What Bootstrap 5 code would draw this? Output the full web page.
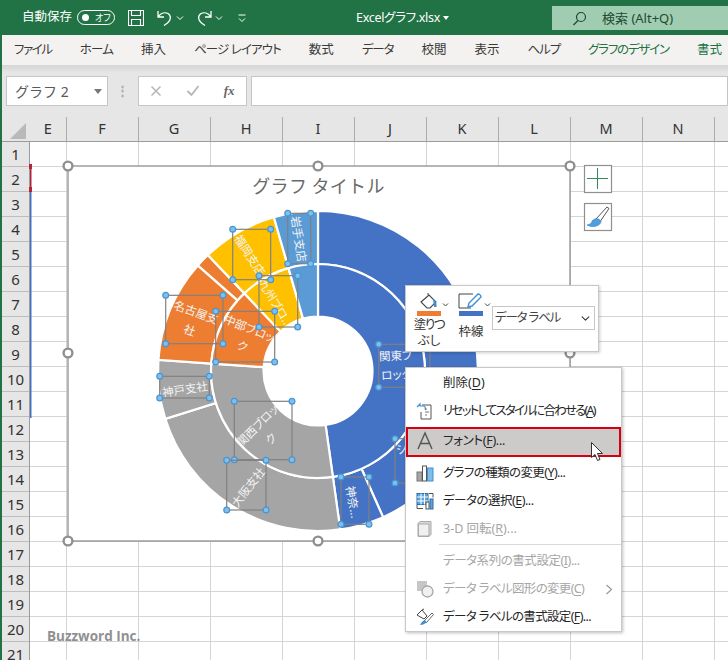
<!DOCTYPE html>
<html lang="ja">
<head>
<meta charset="utf-8">
<title>Excelグラフ.xlsx</title>
<link rel="stylesheet" href="https://cdn.jsdelivr.net/npm/bootstrap@5.3.0/dist/css/bootstrap.min.css">
<style>
html,body{height:660px;overflow:hidden;background:#fff}
body{font-family:"Noto Sans","Noto Sans CJK JP",sans-serif;font-size:12.5px;color:#262626;font-feature-settings:"palt"}
.stage{width:728px;height:660px;overflow:hidden;border-left:2px solid #217346}
.titlebar{height:35px;margin-left:-2px;background:#217346;color:#fff}
.qa-label{margin-left:22px;font-size:12.5px;width:55px}
.autotoggle{width:38px;height:15px;border:1.2px solid #fff;border-radius:8px;font-size:9px;line-height:13px;padding-left:17px;margin-right:13px}
.autotoggle::before{content:"";position:absolute;left:4px;top:3px;width:7px;height:7px;background:#fff;border-radius:50%}
.qa-undo{margin-left:12px}
.qa-chev{margin-left:2px}
.qa-redo{margin-left:11px}
.qa-more{margin-left:14px}
.filename{position:absolute;left:356px;top:9px;font-size:12.5px;letter-spacing:-.3px}
.filecaret{position:absolute;left:443px;top:16px;width:0;height:0;border:3px solid transparent;border-top:4px solid #fff;border-bottom:0}
.searchbox{position:absolute;left:552px;top:6px;width:176px;height:24px;background:#a0cdb1;color:#1d4a30;font-size:13px;padding-left:50px;line-height:24px}
.searchglass{position:absolute;left:20px;top:5px}
.tabbar{height:30px;margin-left:-2px;padding-left:14px;background:#f3f2f1;gap:28px;font-size:12.5px;line-height:30px;color:#3b3a39;white-space:nowrap;overflow:hidden}
.tabbar span{flex:none}
.tab-file{letter-spacing:-1.4px}
.tab-home{letter-spacing:-.8px}
.tab-page{letter-spacing:-.9px}
.tab-kana{letter-spacing:-1.1px}
.tabgreen{color:#217346;letter-spacing:-1.2px}
.tabgreen2{color:#217346}
.formula{height:52px;background:linear-gradient(#d6d5d4 0,#e6e6e6 8px);padding:11px 0 0 4px}
.fbox{height:30px;background:#fff;border:1px solid #c6c6c6}
.namebox{width:102px;padding:0 8px;font-size:14px;color:#595959;line-height:30px;font-feature-settings:normal}
.caret-d{position:absolute;right:5px;top:12px;width:0;height:0;border:4px solid transparent;border-top:5px solid #777;border-bottom:0}
.dots{width:30px;color:#aaa;font-size:13px;font-weight:700;line-height:28px}
.fxbox{width:110px;color:#aaa}
.fxbox i{font-family:"Liberation Serif",serif;font-weight:700;color:#666;font-size:13px}
.inputbox{width:478px;margin-left:4px}
.colhead{height:25px;background:#e6e6e6;border-bottom:1.5px solid #9c9c9c;font-size:14.5px;line-height:23px;color:#333;text-align:center}
.corner{width:28px;flex:none}
.cornermark{position:absolute;left:7px;top:5px}
.hcell{border-right:1px solid #acacac;flex:none;width:72px}
.hcell-e{width:36.5px}
.sheetbody{height:519px}
.rowhead{width:28px;flex:none;background:#e6e6e6;border-right:1.5px solid #9c9c9c;font-size:15px;color:#333;text-align:center}
.rowcell{height:25px;line-height:24px;border-bottom:1px solid #bdbdbd}
.cells{background-color:#fff;background-image:linear-gradient(to right,#d4d4d4 1px,transparent 1px),linear-gradient(to bottom,#d4d4d4 1px,transparent 1px);background-size:72px 25px,72px 25px;background-position:36px 0,0 -1px}
.overlay{position:absolute;left:-2px;top:0;width:728px;height:660px}
.cursorlayer{z-index:1100}
.charttitle{font-feature-settings:normal}
.wm{position:absolute;left:45px;top:626px;font-family:"Open Sans",sans-serif;font-weight:700;font-size:13.5px;color:#8b8b8b;opacity:.95}
.floatbar{position:absolute;left:403px;top:285px;width:194px;height:67px;background:#fff;border:1px solid #c8c8c8;box-shadow:1px 1px 3px rgba(0,0,0,.2);font-size:12.5px;line-height:15px;text-align:center}
.fb-tool{position:absolute;top:0;height:65px;color:#333}
.fb-fill{left:10px;width:48px}
.fb-line{left:52px;width:34px}
.fb-icon{position:absolute;left:0;top:6px}
.fb-tool span{display:block;position:absolute}
.fb-t1{left:-11px;top:31px;width:48px;letter-spacing:-1.5px}
.fb-t2{left:-11px;top:47px;width:48px}
.fb-t3{left:0;top:38px;width:26px}
.fb-select{position:absolute;left:86px;top:20px;width:103px;height:24px;min-height:0;padding:0 0 0 2px;border-radius:0;border-color:#c6c6c6;font-size:12.5px;color:#444;background-position:right 3px center;background-size:11px 9px;box-shadow:none;line-height:20px;font-family:inherit;font-feature-settings:"palt";letter-spacing:-1.2px}
.ctxmenu{position:absolute;left:403px;top:367px;width:217px;height:265px;padding:1px 0 0;margin:0;border:1px solid #c8c8c8;border-radius:0;background:#fff;box-shadow:1px 1px 3px rgba(0,0,0,.25);display:block;font-size:12.5px}
.ctxitem{height:28px;line-height:27px;padding:0 0 0 37px;color:#262626;position:relative;white-space:nowrap;font-size:12.5px}
.ctxitem u{text-underline-offset:2px}
.ctxitem svg{position:absolute;left:10px;top:5px}
.ctxhot{height:30px;line-height:27px;margin:2px 0;background:#cdcbc9;outline:2px solid #d4000f;outline-offset:-2px}
.ctxhot svg{top:4px;left:9px}
.ctxoff{color:#a6a6a6}
.ctxsep{height:1px;background:#d9d9d9;margin:1px 0 2px 33px}
.ctxitem svg.ctxarrow{left:auto;right:8px;top:9px}
.ls-a{letter-spacing:-1.8px}
.ls-b{letter-spacing:-.3px}
.ls-c{letter-spacing:-.6px}
.ls-d{letter-spacing:-.5px}
.ls-e{letter-spacing:-.45px}
.ls-f{letter-spacing:-.65px}
</style>
</head>
<body>
<div class="stage position-relative">
  <div class="titlebar d-flex align-items-center position-relative">
    <span class="qa-label">自動保存</span>
    <span class="autotoggle position-relative">オフ</span>
    <svg width="16" height="16" viewBox="0 0 16 16" fill="none" stroke="#fff" stroke-width="1.1"><path d="M.5.5h15v15H.5zM3.500.5v5h9v-5M3.500 15.500v-6h9v6"/></svg>
    <svg class="qa-undo" width="18" height="18" viewBox="0 0 18 18" fill="none" stroke="#fff" stroke-width="1.3"><path d="M2 2v6h6M2.500 7.500C5 4 9 3 12 4.500c3.500 2 3 7-.5 9.500L8 16.500"/></svg>
    <svg class="qa-chev" width="8" height="8" viewBox="0 0 8 8" fill="none" stroke="#fff"><path d="M1 2.500l3 3 3-3"/></svg>
    <svg class="qa-redo" width="18" height="18" viewBox="0 0 18 18" fill="none" stroke="#fff" stroke-width="1.3"><path d="M16 2v6h-6M15.500 7.500C13 4 9 3 6 4.500c-3.500 2-3 7 .5 9.500l3.500 2.500"/></svg>
    <svg class="qa-chev" width="8" height="8" viewBox="0 0 8 8" fill="none" stroke="#fff"><path d="M1 2.500l3 3 3-3"/></svg>
    <svg class="qa-more" width="10" height="10" viewBox="0 0 10 10" fill="none" stroke="#fff"><path d="M1.500 2h7M2 5.500l3 3 3-3"/></svg>
    <span class="filename">Excelグラフ.xlsx</span><span class="filecaret"></span>
    <div class="searchbox">
      <svg class="searchglass" width="15" height="15" viewBox="0 0 15 15" fill="none" stroke="#1d4a30" stroke-width="1.200"><circle cx="9" cy="6" r="4.500"/><path d="M6 9.500L1.500 14"/></svg>
      検索 (Alt+Q)
    </div>
  </div>
  <div class="tabbar d-flex">
    <span class="tab-file">ファイル</span><span class="tab-home">ホーム</span><span>挿入</span><span class="tab-page">ページ レイアウト</span><span>数式</span><span class="tab-kana">データ</span><span>校閲</span><span>表示</span><span class="tab-kana">ヘルプ</span><span class="tabgreen">グラフのデザイン</span><span class="tabgreen2">書式</span>
  </div>
  <div class="formula d-flex">
    <div class="fbox namebox position-relative">グラフ 2<span class="caret-d"></span></div>
    <div class="dots text-center">⋮</div>
    <div class="fbox fxbox d-flex align-items-center justify-content-around">
      <svg width="12" height="12" viewBox="0 0 12 12" stroke="#b5b5b5" stroke-width="1.500"><path d="M1.500 1.500l9 9M10.500 1.500l-9 9"/></svg>
      <svg width="14" height="12" viewBox="0 0 14 12" fill="none" stroke="#b5b5b5" stroke-width="1.800"><path d="M1.500 6l4 4 7-9"/></svg>
      <i>fx</i>
    </div>
    <div class="fbox inputbox"></div>
  </div>
  <div class="colhead d-flex position-relative">
    <div class="corner position-relative"><svg class="cornermark" width="18" height="18" viewBox="0 0 18 18"><path d="M1 17L17 1v16z" fill="#b9b9b9"/></svg></div>
    <div class="hcell hcell-e">E</div><div class="hcell">F</div><div class="hcell">G</div><div class="hcell">H</div><div class="hcell">I</div><div class="hcell">J</div><div class="hcell">K</div><div class="hcell">L</div><div class="hcell">M</div><div class="hcell">N</div><div class="hcell"></div>
  </div>
  <div class="sheetbody d-flex">
    <div class="rowhead">
      <div class="rowcell">1</div><div class="rowcell">2</div><div class="rowcell">3</div><div class="rowcell">4</div><div class="rowcell">5</div><div class="rowcell">6</div><div class="rowcell">7</div><div class="rowcell">8</div><div class="rowcell">9</div><div class="rowcell">10</div><div class="rowcell">11</div><div class="rowcell">12</div><div class="rowcell">13</div><div class="rowcell">14</div><div class="rowcell">15</div><div class="rowcell">16</div><div class="rowcell">17</div><div class="rowcell">18</div><div class="rowcell">19</div><div class="rowcell">20</div><div class="rowcell">21</div>
    </div>
    <div class="cells flex-grow-1"></div>
  </div>

  <svg class="overlay" id="chart" viewBox="0 0 728 660" font-family="'Noto Sans CJK JP',sans-serif">
    <rect x="29" y="164" width="3" height="5" fill="#b3263a"/><rect x="29" y="187" width="3" height="5" fill="#b3263a"/>
    <rect x="30" y="168" width="1.500" height="20" fill="#b3263a"/>
    <rect x="30" y="192" width="1.500" height="226" fill="#4472c4"/>
    <rect x="68" y="166" width="502" height="375" fill="#fff" stroke="#8f8f8f" stroke-width="1.300"/>
    <text class="charttitle" x="318.500" y="193" text-anchor="middle" font-size="18" letter-spacing=".3" fill="#6a6a6a">グラフ タイトル</text>
    <g id="donut"></g>
    <g id="labels" fill="#f4f4f4" font-size="11.500" text-anchor="middle"></g>
    <g id="boxes" fill="none" stroke="#808080" stroke-width="1.200"></g>
    <g id="handles" fill="#fff" stroke="#8f8f8f" stroke-width="2.400"></g>
    <rect x="584.500" y="165.500" width="27" height="27" fill="#fff" stroke="#8f8f8f" stroke-width="1.200"/>
    <path d="M587 178.500h21M597.500 168v21" stroke="#3b8a5f" stroke-width="1.100"/>
    <rect x="584.500" y="203.500" width="27" height="27" fill="#fff" stroke="#8f8f8f" stroke-width="1.200"/>
    <path d="M596 219l11-12 2 1.500-8.500 12.500z" fill="#fff" stroke="#555" stroke-width="1"/>
    <path d="M595 219c3-1 6 1 6 3-1 3-5 5-9 4.500-2 0-4-1-5-1.500 3-.5 5-2 5-4 1-1 2-2 3-2z" fill="#4f9fe0" stroke="#3a7fc0" stroke-width=".6"/>
  </svg>

  <div class="wm">Buzzword Inc.</div>

  <div class="floatbar">
    <div class="fb-tool fb-fill">
      <svg class="fb-icon" width="48" height="26" viewBox="0 0 48 26" fill="none">
        <path d="M5 10l8-7 7 7-6 6h-3z" stroke="#444" stroke-width="1.100"/><path d="M12 3V1" stroke="#444"/>
        <path d="M17 7c2 1 4 3 3.500 8h-2.500z" fill="#3f8fd2"/>
        <rect x="1" y="19" width="24" height="5" fill="#ed7d31"/>
        <path d="M27 11.500l2.500 2.500 2.500-2.500" stroke="#444"/>
      </svg>
      <span class="fb-t1">塗りつ</span><span class="fb-t2">ぶし</span>
    </div>
    <div class="fb-tool fb-line">
      <svg class="fb-icon" width="34" height="26" viewBox="0 0 34 26" fill="none">
        <path d="M13 16H1V2h14" stroke="#444" stroke-width="1"/>
        <path d="M10 15l1-4 9-9c1 0 3 1 3 3l-9 9z" fill="#fff" stroke="#3f8fd2" stroke-width="1.400"/>
        <rect x="1" y="19" width="24" height="5" fill="#4472c4"/>
        <path d="M27 11.500l2.500 2.500 2.500-2.500" stroke="#444"/>
      </svg>
      <span class="fb-t3">枠線</span>
    </div>
    <select class="form-select fb-select"><option>データ ラベル</option></select>
  </div>

  <div class="dropdown-menu ctxmenu">
    <div class="ctxitem">削除(<u>D</u>)</div>
    <div class="ctxitem ls-a">
      <svg width="18" height="18" viewBox="0 0 18 18" fill="none"><path d="M6 3h9v14H5V10" stroke="#555"/><path d="M1 5l3-3v2h3c2 0 3 2 2 4" stroke="#3f8fd2" stroke-width="1.200"/><path d="M9 7h2M9 10h4M9 13h2" stroke="#777"/></svg>
      リセットしてスタイルに合わせる(<u>A</u>)</div>
    <div class="ctxitem ctxhot ls-b">
      <svg width="20" height="20" viewBox="0 0 20 20" fill="none" stroke="#555" stroke-width="1.400"><path d="M3 18L10 2l7 16M5.500 12.500h9"/></svg>
      フォント(<u>F</u>)...</div>
    <div class="ctxitem ls-c">
      <svg width="18" height="18" viewBox="0 0 18 18"><rect x="1" y="8" width="5" height="9" fill="#a6a6a6" stroke="#777"/><rect x="6.500" y="2" width="4" height="15" fill="#fff" stroke="#555"/><rect x="11.500" y="4" width="5.500" height="13" fill="#7fbdea" stroke="#3f8fd2"/></svg>
      グラフの種類の変更(<u>Y</u>)...</div>
    <div class="ctxitem ls-d">
      <svg width="18" height="18" viewBox="0 0 18 18"><rect x="1" y="1.500" width="11" height="11" fill="#5da4de" stroke="#2f6ca8"/><path d="M1 5h11M1 9h11M5 1.500v11M8.500 1.500v11" stroke="#fff"/><path d="M13 1.500h4v4M1 13v3.500h6" fill="none" stroke="#555"/><rect x="10" y="10" width="3" height="7" fill="#fff" stroke="#555"/><rect x="14" y="7" width="3" height="10" fill="#5da4de" stroke="#2f6ca8"/></svg>
      データの選択(<u>E</u>)...</div>
    <div class="ctxitem ctxoff">
      <svg width="18" height="18" viewBox="0 0 18 18"><path d="M4 1.500h11v13l-2 2H2V3.500z" fill="#d9d9d9" stroke="#aaa"/><rect x="2.500" y="4" width="10.500" height="12" fill="#f0f0f0" stroke="#aaa"/></svg>
      3-D 回転(<u>R</u>)...</div>
    <div class="ctxsep"></div>
    <div class="ctxitem ctxoff ls-e">データ系列の書式設定(<u>I</u>)...</div>
    <div class="ctxitem ctxoff ls-f">
      <svg width="18" height="18" viewBox="0 0 18 18"><rect x="1" y="1" width="10" height="10" fill="#c6c6c6"/><circle cx="11.500" cy="11.500" r="5.500" fill="#f0f0f0" stroke="#a6a6a6" stroke-width="1.300"/></svg>
      データ ラベル図形の変更(<u>C</u>)
      <svg class="ctxarrow" width="8" height="11" viewBox="0 0 8 11" fill="none" stroke="#999" stroke-width="1.200"><path d="M1.500 1l5 4.500-5 4.500"/></svg></div>
    <div class="ctxitem ls-f">
      <svg width="18" height="18" viewBox="0 0 18 18" fill="none"><path d="M1 7l5-5 5 6-3 3z" fill="#fff" stroke="#444"/><path d="M6 2l2-1" stroke="#444"/><path d="M8 13l8-8 1.500 1.500-7 8z" fill="#fff" stroke="#555" stroke-width=".9"/><path d="M4 17c1-2 2-4 5-5l1.500 2c-1 2-4 3-6.500 3z" fill="#3f8fd2"/></svg>
      データ ラベルの書式設定(<u>F</u>)...</div>
  </div>

  <svg class="overlay cursorlayer" viewBox="0 0 728 660">
    <path d="M591.500 442.500v15l3.500-3 2.500 6 2.500-1-2.500-6h5z" fill="#fff" stroke="#333" stroke-width="1"/>
  </svg>
</div>
<script>
(function(){
  var cx=318,cy=371,NS="http://www.w3.org/2000/svg";
  function p(r,a){var t=a*Math.PI/180;return [(cx+r*Math.sin(t)).toFixed(2),(cy-r*Math.cos(t)).toFixed(2)];}
  function wedge(r0,r1,a0,a1){
    var l=(a1-a0)>180?1:0,A=p(r1,a0),B=p(r1,a1),C=p(r0,a1),D=p(r0,a0);
    return "M"+A+"A"+r1+" "+r1+" 0 "+l+" 1 "+B+"L"+C+"A"+r0+" "+r0+" 0 "+l+" 0 "+D+"Z";
  }
  function add(parent,name,attrs,text){
    var e=document.createElementNS(NS,name);
    for(var k in attrs)e.setAttribute(k,attrs[k]);
    if(text)e.textContent=text;
    document.getElementById(parent).appendChild(e);return e;
  }
  var B="#4472c4",G="#a5a5a5",O="#ed7d31",Y="#ffc000",L="#5b9bd5";
  var outer=[[0,156,B],[156,172,B],[172,252.6,G],[252.6,274,G],[274,311.3,O],[311.3,316.5,O],[316.5,344,Y],[344,360,L]];
  var inner=[[0,172,B],[172,274,G],[274,316.5,O],[316.5,344,Y],[344,360,L]];
  outer.forEach(function(s){add("donut","path",{d:wedge(107,160,s[0],s[1]),fill:s[2],stroke:"#fff","stroke-width":2.2});});
  inner.forEach(function(s){add("donut","path",{d:wedge(54.5,107,s[0],s[1]),fill:s[2],stroke:"#fff","stroke-width":2.2});});
  var labels=[
    [299,239,81,["岩手支店"]],
    [250,255,57,["福岡支店"]],
    [276,303,58,["九州ブロ..."]],
    [246,337,22,["中部ブロッ","ク"]],
    [193,321,20,["名古屋支","社"]],
    [185,389,-9,["神戸支社"]],
    [264,432,-45,["関西ブロッ","ク"]],
    [248,487,-52,["大阪支社"]],
    [353,502,80,["神奈..."]],
    [396,365,-3,["関東ブ","ロック"]]
  ];
  labels.forEach(function(l){
    var n=l[3].length;
    l[3].forEach(function(t,i){
      add("labels","text",{x:l[0],y:l[1]+4.5+(i-(n-1)/2)*19,transform:"rotate("+l[2]+" "+l[0]+" "+l[1]+")"},t);
    });
  });
  add("labels","text",{x:403,y:453},"\u30b7").setAttribute("transform","rotate(-20 403 453)");
  var boxes=[[287.7,213.3,310.7,263.7],[232.7,229.3,270.7,279.7],[259,275.7,297.7,327],[215.7,311.3,274.7,362],[165.7,295.3,223,343.7],[159.7,376.3,209.3,398],[234.3,401.3,292,459.7],[226.7,460.3,266,510],[341,477,369,524.3],[378.7,344.3,430,387.3],[395,438.7,430,483]];
  boxes.forEach(function(b){
    add("boxes","rect",{x:b[0],y:b[1],width:b[2]-b[0],height:b[3]-b[1]});
    [[b[0],b[1]],[b[2],b[1]],[b[0],b[3]],[b[2],b[3]]].forEach(function(c){
      add("boxes","circle",{cx:c[0],cy:c[1],r:2.9,fill:"#7cc0f0",stroke:"#4a94cf","stroke-width":1.2});
    });
  });
  [[68,166],[318,166],[570,166],[68,353],[570,353],[68,541],[318,541],[570,541]].forEach(function(c){
    add("handles","circle",{cx:c[0],cy:c[1],r:4.4});
  });
})();
</script>
</body>
</html>
